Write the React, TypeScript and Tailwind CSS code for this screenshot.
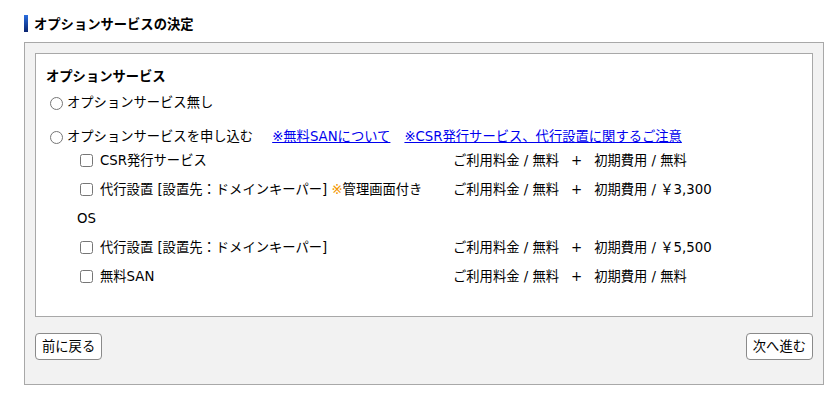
import React from "react";

const rows = [
  { name: "CSR発行サービス", fee: "無料" },
  { name: "代行設置 [設置先：ドメインキーパー]", note: "※", noteRest: "管理画面付き", fee: "￥3,300" },
  { os: true },
  { name: "代行設置 [設置先：ドメインキーパー]", fee: "￥5,500" },
  { name: "無料SAN", fee: "無料" },
];

const App: React.FC = () => {
  return (
    <div
      className="w-[840px] h-[400px] bg-white text-black text-[13.3px] leading-[18px] pt-[15px]"
      style={{ fontFamily: '"DejaVu Sans", "Noto Sans CJK JP", sans-serif' }}
    >
      <div className="flex items-center ml-[24px] h-[17px]">
        <div className="w-[4px] h-[17px] bg-gradient-to-b from-[#2a6ee0] to-[#0a2470]"></div>
        <p className="ml-[6px] pt-[3px] font-bold">オプションサービスの決定</p>
      </div>

      <div className="ml-[24px] mt-[10px] w-[800px] border border-[#a8a8a8] bg-[#f2f2f2] p-[10px] pb-[24px]">
        <div className="h-[264px] border border-[#a8a8a8] bg-white px-[10px] pt-[14px]">
          <p className="font-bold">オプションサービス</p>

          <label className="flex items-center mt-[8px] ml-[4px]">
            <input type="radio" name="opt" className="w-[13px] h-[13px] m-0" />
            <span className="ml-[4px]">オプションサービス無し</span>
          </label>

          <div className="flex items-center mt-[16px] ml-[4px]">
            <input type="radio" name="opt" className="w-[13px] h-[13px] m-0" />
            <span className="ml-[4px]">オプションサービスを申し込む</span>
            <a href="#" className="ml-[19px] text-[#0000ee] underline">※無料SANについて</a>
            <a href="#" className="ml-[14px] text-[#0000ee] underline">
              ※CSR発行サービス、代行設置に関するご注意
            </a>
          </div>

          <div className="flex flex-col">
            {rows.map((r, i) =>
              r.os ? (
                <div key={i} className="h-[29px] flex items-center pl-[31px]">
                  OS
                </div>
              ) : (
                <div key={i} className="h-[29px] flex items-center pl-[34px]">
                  <input type="checkbox" className="w-[13px] h-[13px] m-0" />
                  <span className="ml-[7px] w-[353px] whitespace-nowrap">
                    {r.name}
                    {r.note && (
                      <>
                        {" "}
                        <span className="text-[#f39800]">{r.note}</span>
                        {r.noteRest}
                      </>
                    )}
                  </span>
                  <span className="whitespace-nowrap">ご利用料金 / 無料</span>
                  <span className="ml-[12px]">+</span>
                  <span className="ml-[12px] whitespace-nowrap">初期費用 / {r.fee}</span>
                </div>
              )
            )}
          </div>
        </div>

        <div className="flex justify-between mt-[16px]">
          <button className="h-[27px] px-[6px] border border-[#8a8a8a] rounded-[4px] bg-white">
            前に戻る
          </button>
          <button className="h-[27px] px-[6px] border border-[#8a8a8a] rounded-[4px] bg-white">
            次へ進む
          </button>
        </div>
      </div>
    </div>
  );
};

export default App;
